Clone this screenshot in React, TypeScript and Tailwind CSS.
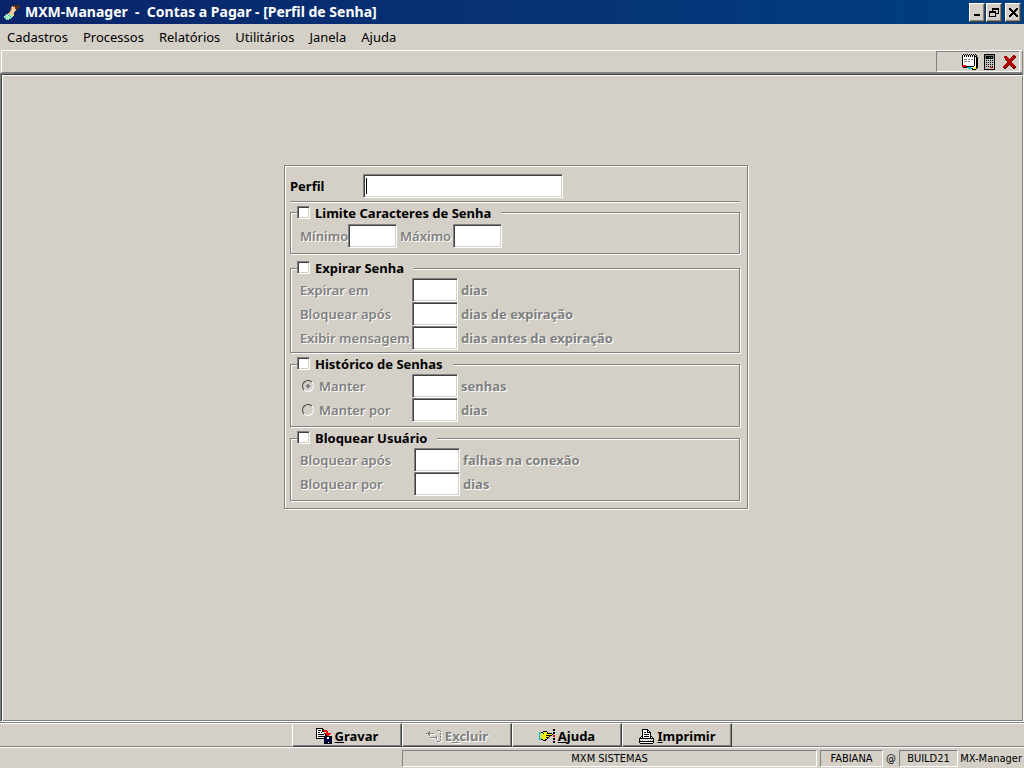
import { useState } from "react";
import type { ReactNode } from "react";

const PALETTE: Record<string, string> = {
  k: "#000000",
  w: "#ffffff",
  r: "#ff0000",
  m: "#b00000",
  d: "#600000",
  c: "#00c0c0",
  y: "#f8f000",
  g: "#808080",
  l: "#c0c0c0",
  s: "#f8cca0",
  o: "#d89860",
  b: "#5a3010",
  t: "#a0e8c8",
  n: "#000080",
};

// Small bitmap icons, one character per pixel
const ICONS = {
  app: [
    ".........bbb.bb.",
    "........sbbbbbbb",
    ".......osssbbbb.",
    ".......osssbbb..",
    ".......ossssb...",
    "......osssso....",
    "......ossss.....",
    ".....ossss......",
    "....tossso......",
    "..ttttssst......",
    ".ttwctttty......",
    "ttytttctt.......",
    "tcttwttt........",
    ".tttyct.........",
    "..tct...........",
  ],
  calendar: [
    ".k.k.k.k.k.k.k..",
    "k.k.k.k.k.k.k.k.",
    "kwkwkwkwkwkwkkk.",
    "kwwwwwwwwwwwkwkk",
    "kwwwwwwwwwwwkwkk",
    "kwgggwggwggwkwkk",
    "kwwwwwwwwwwwkwkk",
    "kwgggwggwwwwkwkk",
    "kwwwwwwwwwwwkwkk",
    "kwwwwwwwwwwwkwkk",
    "kwwwwwwwwwwwkwkk",
    "krrrwwwwwwwwkwkk",
    "rrrrkkkkkkkkwwkk",
    ".kkkkccccwwwwykk",
    "......cccckyyyk.",
    "..........kkkk..",
  ],
  calculator: [
    "kkkkkkkkkkk",
    "kgggggggggk",
    "kgkkkkkkkgk",
    "kgkkkckckgk",
    "kgkkkkkkkgk",
    "klllllllllk",
    "klklklklklk",
    "klllllllllk",
    "klklklklklk",
    "klllllllllk",
    "klklklklklk",
    "klllllllllk",
    "klklklklklk",
    "klllllrrrlk",
    "klllllllllk",
    "kkkkkkkkkkk",
  ],
  close: [
    "..........mm.",
    ".mmm.....mmmm",
    ".mmmm...mmmmd",
    "..mmmm.mmmmd.",
    "..dmmmmmmmd..",
    "...dmmmmmd...",
    "....mmmmm....",
    "....mmmmm....",
    "...mmmmmmm...",
    "..mmmmdmmmm..",
    ".mmmmd.dmmmm.",
    "mmmmd...dmmmm",
    "mmmd.....dmmd",
    ".dd.......dd.",
  ],
  save: [
    "kkkkkkk.........",
    "kwwwwwkk........",
    "kwkkkwkrrrr.....",
    "kwwwwwkkrrrr....",
    "kwkkwkwwwwrr....",
    "kwwwwwwwkrrrrrr.",
    "kwkkkkkkwkrrrr..",
    "kwwwwwwwwkkrr...",
    "kwkkkkkkkkkkkkkk",
    "kwwwwwwwknkwwknk",
    "kkkkkkkkknkwwknk",
    "........knnkkknk",
    "........knnnnnnk",
    "........knkkkknk",
    "........knkkwknk",
    "........kkkkkkkk",
  ],
  remove: [
    "...........ggg..",
    "...g..........g.",
    "..gg............",
    "gggggggg......g.",
    "..gg..........g.",
    "...g............",
    "..........g...g.",
    "....ggggggg...g.",
    "..........g.....",
    "..............g.",
    "..............g.",
    "...........ggg..",
  ],
  help: [
    "..............kk",
    "..............kk",
    "....kkkk........",
    "c.kkyyyyk.....kk",
    "ccyykyyykkkkk.kk",
    "c.yyyyyyyyyyyk..",
    "c.yyyyykkkkkk.rr",
    "c.yyyyyyyyk...rr",
    "c.yyyyykkk......",
    "ccyyyyyyk.....kk",
    "c.kkyykk......kk",
    "....kkk.........",
    "..............kk",
    "..............kk",
  ],
  print: [
    "....kkkkkk......",
    "....kwwwwkk.....",
    "....kwwwwkwk....",
    "....kwkkwkkkk...",
    "....kwwwwwwwk...",
    "....kwkkkkkwk...",
    "....kwwwwwwwk...",
    "...kkwkkkkkwkk..",
    "..kwkwwwwwwwkwk.",
    ".kkkkkkkkkkkkkkk",
    ".kwlwlwlwlwlwlwk",
    ".klwlwlwlwlwlwlk",
    ".kkkkkkkkkkkkkkk",
    ".kwwwwwwwwwwwwwk",
    "..kkkkkkkkkkkkk.",
  ],
  minimize: ["......", "......", "......", "......", "......", "......", "kkkkkk", "kkkkkk"],
  restore: [
    "...kkkkkkk",
    "...kkkkkkk",
    "...k.....k",
    "kkkkkkk..k",
    "kkkkkkk..k",
    "k.....kkkk",
    "k.....k...",
    "k.....k...",
    "kkkkkkk...",
  ],
  cross: [
    "kk.....kk",
    "kkk...kkk",
    ".kkk.kkk.",
    "..kkkkk..",
    "...kkk...",
    "..kkkkk..",
    ".kkk.kkk.",
    "kkk...kkk",
    "kk.....kk",
  ],
};

function PixelIcon({ name, className = "" }: { name: keyof typeof ICONS; className?: string }) {
  const rows = ICONS[name];
  return (
    <svg
      width={rows[0].length}
      height={rows.length}
      viewBox={`0 0 ${rows[0].length} ${rows.length}`}
      shapeRendering="crispEdges"
      aria-hidden="true"
      className={`shrink-0 ${className}`}
    >
      {rows.flatMap((row, y) =>
        row.split("").map((ch, x) =>
          PALETTE[ch] ? <rect key={`${x}-${y}`} x={x} y={y} width={1} height={1} fill={PALETTE[ch]} /> : null
        )
      )}
    </svg>
  );
}

const SUNKEN =
  "appearance-none rounded-none bg-white border border-t-[#808080] border-l-[#808080] border-b-white border-r-white shadow-[inset_1px_1px_0_#404040,inset_-1px_-1px_0_#d4d0c8] outline-none";
const RAISED =
  "border border-t-white border-l-white border-b-[#404040] border-r-[#404040] shadow-[inset_-1px_-1px_0_#808080]";
const ETCHED = "border border-[#808080] shadow-[1px_1px_0_#fff,inset_1px_1px_0_#fff]";
const DISABLED_TEXT = "text-[#808080] [text-shadow:1px_1px_0_#fff]";

interface GroupProps {
  title: string;
  className: string;
  legendClassName?: string;
  children: ReactNode;
}

function Group({ title, className, legendClassName = "pb-0.5", children }: GroupProps) {
  const [checked, setChecked] = useState(false);

  return (
    <fieldset className={`min-w-0 ${ETCHED} ${className}`}>
      <legend className={`ml-1.5 bg-[#d4d0c8] pr-2.5 ${legendClassName}`}>
        <label className="flex h-[17px] items-center gap-[5px]">
          <input
            type="checkbox"
            checked={checked}
            onChange={(e) => setChecked(e.target.checked)}
            className={`h-[13px] w-[13px] ${SUNKEN} checked:bg-gray-500`}
          />
          {title}
        </label>
      </legend>
      {children}
    </fieldset>
  );
}

interface FieldRowProps {
  id: string;
  label: string;
  suffix: string;
  labelWidth?: string;
  radio?: boolean;
  checked?: boolean;
}

function FieldRow({ id, label, suffix, labelWidth = "w-[112px]", radio, checked }: FieldRowProps) {
  return (
    <div className={`flex h-6 items-center pl-[9px] ${DISABLED_TEXT}`}>
      <div className={`flex shrink-0 items-center font-semibold whitespace-nowrap ${labelWidth}`}>
        {radio && (
          <input
            type="radio"
            id={`${id}-opt`}
            name="historico"
            defaultChecked={checked}
            disabled
            className="mr-[5px] ml-0.5 h-3 w-3 appearance-none rounded-full border border-t-[#404040] border-r-white border-b-white border-l-[#404040] checked:bg-[radial-gradient(circle,#808080_2px,transparent_2px)]"
          />
        )}
        <label htmlFor={radio ? `${id}-opt` : id}>{label}</label>
      </div>
      <input id={id} type="text" disabled aria-label={`${label} ${suffix}`} className={`h-6 w-[46px] ${SUNKEN}`} />
      <span className="ml-[3px] whitespace-nowrap">{suffix}</span>
    </div>
  );
}

const MENUS = ["Cadastros", "Processos", "Relatórios", "Utilitários", "Janela", "Ajuda"];

const ACTIONS: { icon: keyof typeof ICONS; pre: string; hot: string; post: string; disabled?: boolean }[] = [
  { icon: "save", pre: "", hot: "G", post: "ravar" },
  { icon: "remove", pre: "E", hot: "x", post: "cluir", disabled: true },
  { icon: "help", pre: "", hot: "A", post: "juda" },
  { icon: "print", pre: "", hot: "I", post: "mprimir" },
];

function TitleBar() {
  return (
    <header className="flex h-6 items-center bg-linear-to-r from-[#0a246a] to-[#004080] pr-[3px] pl-1 text-white">
      <PixelIcon name="app" />
      <h1 className="ml-[5px] flex-1 text-sm leading-5 font-bold whitespace-pre">
        {"MXM-Manager  -  Contas a Pagar - [Perfil de Senha]"}
      </h1>
      <div className="flex gap-px">
        <button aria-label="Minimizar" className={`flex h-[19px] w-4 items-center justify-center bg-[#d4d0c8] ${RAISED}`}>
          <PixelIcon name="minimize" />
        </button>
        <button aria-label="Restaurar" className={`flex h-[19px] w-4 items-center justify-center bg-[#d4d0c8] ${RAISED}`}>
          <PixelIcon name="restore" />
        </button>
        <button aria-label="Fechar" className={`ml-0.5 flex h-[19px] w-4 items-center justify-center bg-[#d4d0c8] ${RAISED}`}>
          <PixelIcon name="cross" />
        </button>
      </div>
    </header>
  );
}

function Toolbar() {
  return (
    <div className="mx-px flex h-[23px] justify-end border border-t-white border-r-[#808080] border-b-[#808080] border-l-white pr-0.5">
      <div className="flex w-[84px] items-center justify-end gap-1.5 border border-t-[#808080] border-r-white border-b-white border-l-[#808080] pr-[3px]">
        <button aria-label="Calendário">
          <PixelIcon name="calendar" />
        </button>
        <button aria-label="Calculadora">
          <PixelIcon name="calculator" />
        </button>
        <button aria-label="Sair" className="ml-0.5">
          <PixelIcon name="close" />
        </button>
      </div>
    </div>
  );
}

function PasswordProfileForm() {
  return (
    <form className={`flex w-[464px] flex-col pt-2 pr-[7px] pb-[7px] pl-[5px] font-bold ${ETCHED}`}>
      <div className="flex items-center">
        <label htmlFor="perfil" className="w-[73px]">
          Perfil
        </label>
        <div className="relative">
          <input id="perfil" type="text" className={`block h-6 w-[200px] px-1 ${SUNKEN}`} />
          <span className="absolute top-1 left-[3px] h-4 w-px bg-black" />
        </div>
      </div>
      <hr className="mt-[3px] mb-px h-0.5 border-t border-b border-t-[#808080] border-b-white" />

      <Group title="Limite Caracteres de Senha" className="pt-[3px] pb-[5px]" legendClassName="pb-0">
        <div className={`flex h-6 items-center pl-[9px] font-semibold ${DISABLED_TEXT}`}>
          <label htmlFor="minimo" className="w-12">
            Mínimo
          </label>
          <input id="minimo" type="text" disabled className={`h-6 w-[49px] ${SUNKEN}`} />
          <label htmlFor="maximo" className="ml-[3px] w-[53px]">
            Máximo
          </label>
          <input id="maximo" type="text" disabled className={`h-6 w-[49px] ${SUNKEN}`} />
        </div>
      </Group>

      <Group title="Expirar Senha" className="mt-[5px] pb-0.5">
        <FieldRow id="expirar" label="Expirar em" suffix="dias" />
        <FieldRow id="bloquear-exp" label="Bloquear após" suffix="dias de expiração" />
        <FieldRow id="mensagem" label="Exibir mensagem" suffix="dias antes da expiração" />
      </Group>

      <Group title="Histórico de Senhas" className="mt-0.5 pb-1">
        <FieldRow id="manter" label="Manter" suffix="senhas" radio checked />
        <FieldRow id="manter-por" label="Manter por" suffix="dias" radio />
      </Group>

      <Group title="Bloquear Usuário" className="mt-0.5 pb-1">
        <FieldRow id="falhas" label="Bloquear após" suffix="falhas na conexão" labelWidth="w-[114px]" />
        <FieldRow id="bloquear-por" label="Bloquear por" suffix="dias" labelWidth="w-[114px]" />
      </Group>
    </form>
  );
}

function StatusBar() {
  const cell = "border border-t-[#808080] border-l-[#808080] border-r-white border-b-white text-center";
  return (
    <footer className="flex h-5 items-stretch pt-0.5 pb-px font-['DejaVu_Sans_Condensed','DejaVu_Sans',sans-serif] text-[11px] leading-4 whitespace-nowrap">
      <div className="w-[402px] shrink-0" />
      <div className={`flex-1 ${cell}`}>MXM SISTEMAS</div>
      <div className={`ml-[3px] w-[63px] ${cell}`}>FABIANA</div>
      <div className="w-4 pt-px text-center">@</div>
      <div className={`w-[59px] ${cell}`}>BUILD21</div>
      <div className="w-[66px] pt-px pr-0.5 text-right">MX-Manager</div>
    </footer>
  );
}

export default function App() {
  return (
    <div className="flex min-h-screen flex-col bg-[#d4d0c8] font-['Noto_Sans',sans-serif] text-[13px] leading-4 text-black">
      <TitleBar />
      <nav className="flex h-[26px] items-center gap-[15px] pl-[7px]">
        {MENUS.map((menu) => (
          <button key={menu}>{menu}</button>
        ))}
      </nav>
      <Toolbar />

      <main className="flex flex-1 flex-col items-center border border-t-[#808080] border-r-white border-b-white border-l-[#808080] pt-[91px] pl-2 shadow-[inset_1px_1px_0_#404040,inset_2px_2px_0_#fff,inset_-1px_-1px_0_#808080]">
        <PasswordProfileForm />
      </main>

      <div className="flex h-[26px] justify-center border-t border-b border-t-[#808080] border-b-white shadow-[inset_0_1px_0_#fff,inset_0_-1px_0_#808080]">
        {ACTIONS.map(({ icon, pre, hot, post, disabled }) => (
          <button
            key={icon}
            disabled={disabled}
            className={`flex w-[110px] items-center justify-center gap-[3px] bg-[#d4d0c8] pt-0.5 font-bold ${RAISED} ${disabled ? DISABLED_TEXT : ""}`}
          >
            <PixelIcon name={icon} className={disabled ? "drop-shadow-[1px_1px_0_#fff]" : ""} />
            <span>
              {pre}
              <u>{hot}</u>
              {post}
            </span>
          </button>
        ))}
      </div>

      <StatusBar />
    </div>
  );
}
